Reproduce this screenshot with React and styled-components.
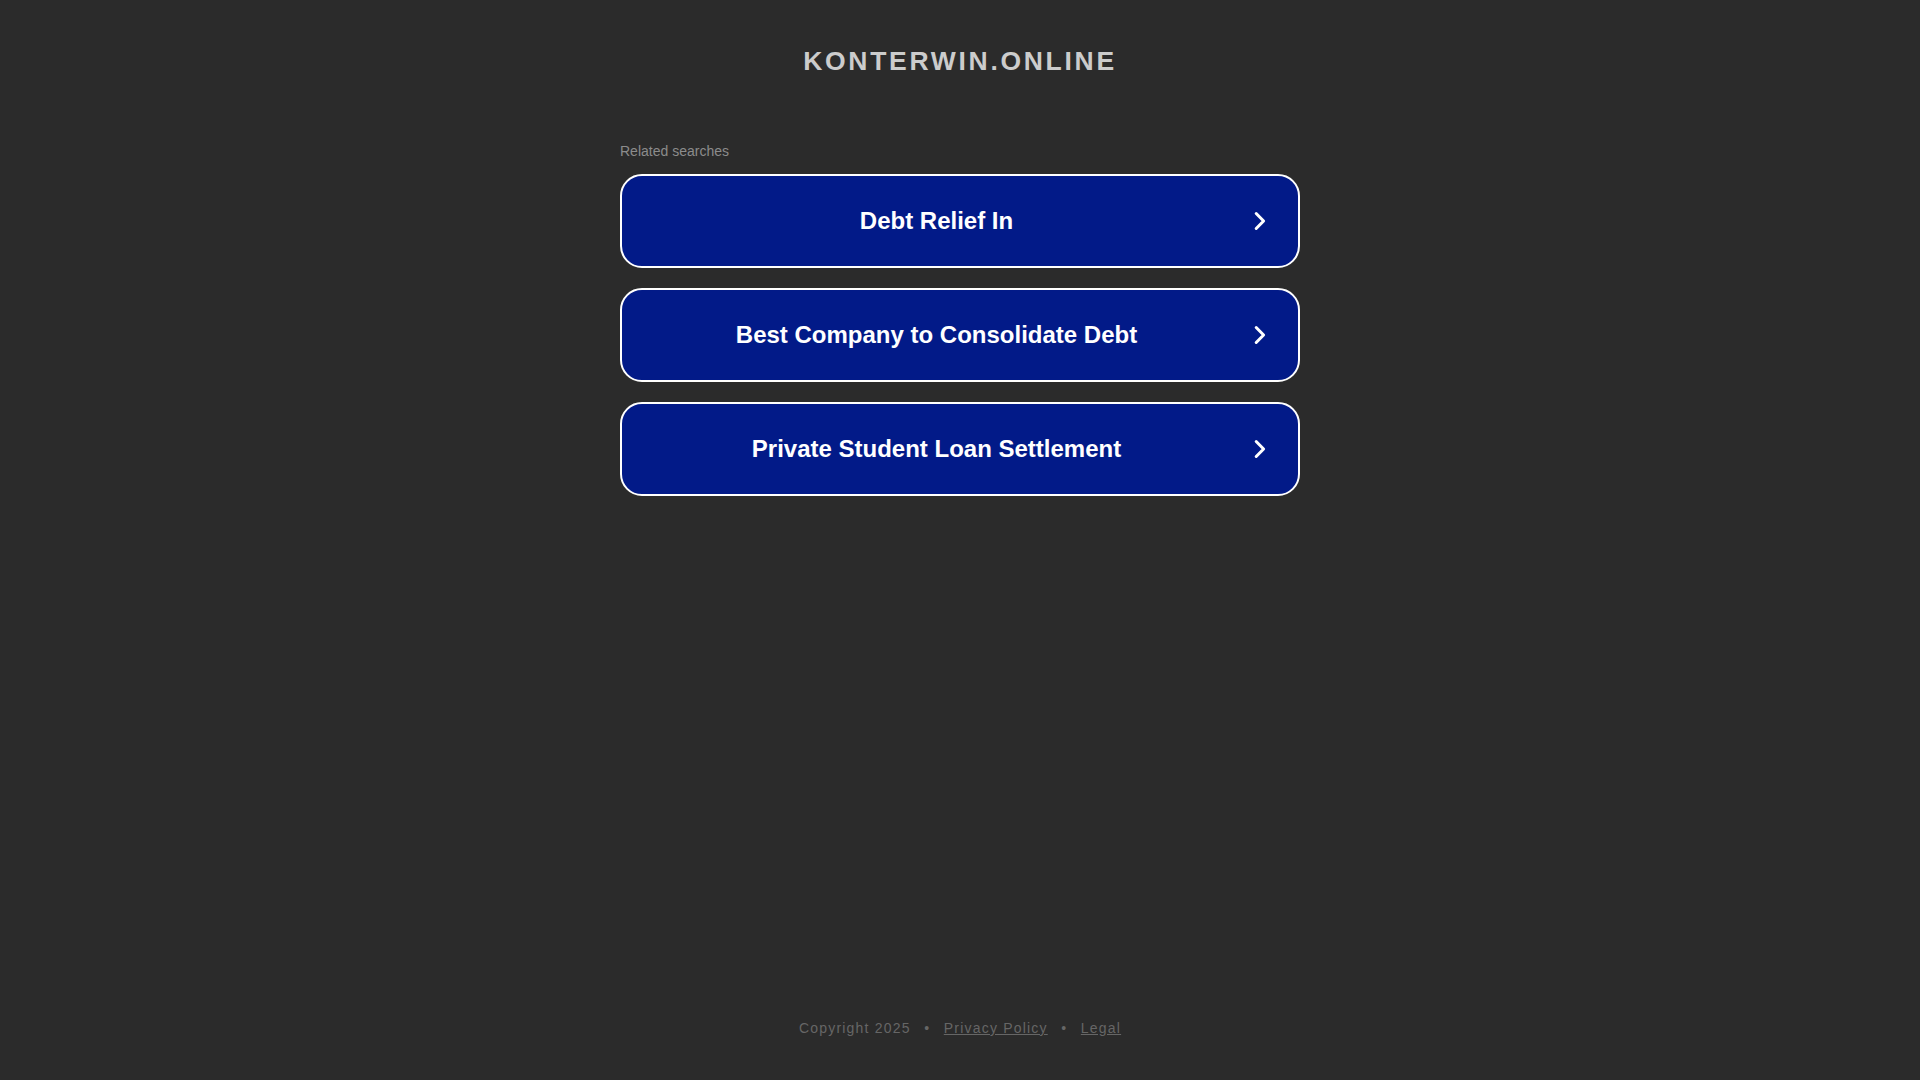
import styled, { createGlobalStyle } from "styled-components";

const GlobalStyle = createGlobalStyle`
  html, body {
    margin: 0;
    padding: 0;
    background: #2b2b2b;
    font-family: "Liberation Sans", Arial, sans-serif;
  }
  * {
    box-sizing: border-box;
  }
`;

const searches = [
  "Debt Relief In",
  "Best Company to Consolidate Debt",
  "Private Student Loan Settlement",
];

const Chevron = () => (
  <svg width="12" height="20" viewBox="0 0 12 20" fill="none">
    <path
      d="M2.2 2.5 L9.6 10 L2.2 17.5"
      stroke="#fff"
      strokeWidth="3"
      strokeLinecap="round"
      strokeLinejoin="round"
    />
  </svg>
);

const App = () => {
  return (
    <StyledPage>
      <GlobalStyle />
      <Title>konterwin.online</Title>
      <Main>
        <Label>Related searches</Label>
        <List>
          {searches.map((text) => (
            <SearchLink key={text} href="#">
              <span>{text}</span>
              <Chevron />
            </SearchLink>
          ))}
        </List>
      </Main>
      <Footer>
        <span>Copyright 2025</span>
        <Dot>•</Dot>
        <FooterLink href="#">Privacy Policy</FooterLink>
        <Dot>•</Dot>
        <FooterLink href="#">Legal</FooterLink>
      </Footer>
    </StyledPage>
  );
};

const StyledPage = styled.div`
  display: flex;
  flex-direction: column;
  align-items: center;
  min-height: 100vh;
  width: 100%;
`;

const Title = styled.h1`
  margin: 46px 0 0 0;
  font-size: 26.5px;
  line-height: 30px;
  font-weight: 700;
  letter-spacing: 2.7px;
  text-transform: uppercase;
  color: #cccccc;
`;

const Main = styled.div`
  display: flex;
  flex-direction: column;
  width: 680px;
  margin-top: 67px;
  flex: 1;
`;

const Label = styled.div`
  font-size: 14px;
  line-height: 16px;
  color: #8c8c8c;
  margin-bottom: 15px;
`;

const List = styled.div`
  display: flex;
  flex-direction: column;
  gap: 20px;
`;

const SearchLink = styled.a`
  display: flex;
  align-items: center;
  gap: 23px;
  height: 94px;
  padding: 0 32px 0 20px;
  background: #021a88;
  border: 2px solid #ffffff;
  border-radius: 22px;
  color: #ffffff;
  text-decoration: none;
  font-size: 24px;
  font-weight: 700;

  & > span {
    flex: 1;
    text-align: center;
  }

  & > svg {
    flex-shrink: 0;
  }
`;

const Footer = styled.footer`
  display: flex;
  align-items: center;
  justify-content: center;
  padding-bottom: 43px;
  font-size: 14px;
  line-height: 18px;
  letter-spacing: 1.2px;
  color: #666666;
`;

const Dot = styled.span`
  margin: 0 13.5px;
`;

const FooterLink = styled.a`
  color: #666666;
  text-decoration: underline;
`;

export default App;
